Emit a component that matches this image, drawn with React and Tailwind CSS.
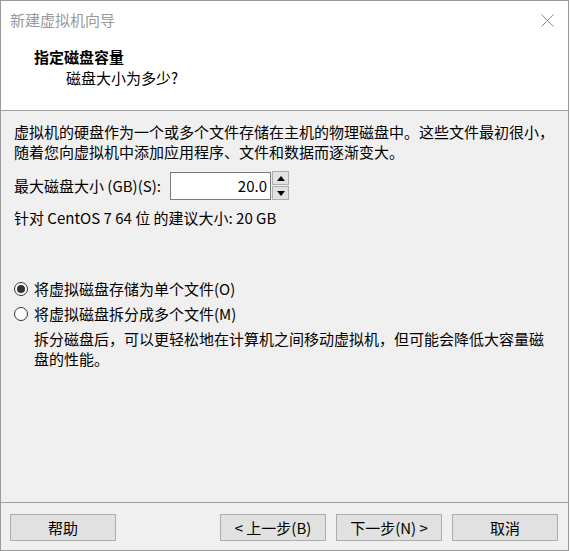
import React from "react";

const font = "font-['Noto_Sans_CJK_SC','Noto_Sans',sans-serif]";

const Radio = ({ checked, label }) => (
    <div className="flex items-center h-[20px]">
        <span className="w-[14px] h-[14px] rounded-full border border-[#333333] bg-white flex items-center justify-center">
            {checked && <span className="w-[8px] h-[8px] rounded-full bg-[#333333]" />}
        </span>
        <span className="ml-[6px]">{label}</span>
    </div>
);

const Button = ({ children }) => (
    <button className="w-[106px] h-[27px] border border-[#adadad] bg-[#e1e1e1] text-[15px] leading-none text-black flex items-center justify-center">
        {children}
    </button>
);

const Spin = ({ up }) => (
    <div className="h-[14px] w-[17px] border border-[#adadad] bg-[#e1e1e1] flex items-center justify-center">
        <svg width="8" height="5" viewBox="0 0 8 5">
            {up ? <polygon points="0,5 8,5 4,0" fill="#000" /> : <polygon points="0,0 8,0 4,5" fill="#000" />}
        </svg>
    </div>
);

export default function App() {
    return (
        <div className={`${font} w-[569px] h-[551px] border border-[#9b9b9b] bg-[#f0f0f0] flex flex-col text-[15px] text-black`}>
            {/* title bar */}
            <div className="h-[38px] bg-white flex items-center justify-between pl-[9px] pr-[14px]">
                <span className="text-[#999999] leading-[20px]">新建虚拟机向导</span>
                <svg width="13" height="13" viewBox="0 0 13 13">
                    <path d="M0.5 0.5 L12.5 12.5 M12.5 0.5 L0.5 12.5" stroke="#8a8a8a" strokeWidth="1" />
                </svg>
            </div>

            {/* header */}
            <div className="bg-white border-b border-[#a0a0a0] pt-[8px] pb-[22px] pl-[33px]">
                <div className="font-bold leading-[20px]">指定磁盘容量</div>
                <div className="mt-[1px] pl-[32px] leading-[20px]">磁盘大小为多少?</div>
            </div>

            {/* body */}
            <div className="flex-1 pl-[13px] pt-[11px] leading-[20px] whitespace-nowrap">
                <p>
                    虚拟机的硬盘作为一个或多个文件存储在主机的物理磁盘中。这些文件最初很小，
                    <br />
                    随着您向虚拟机中添加应用程序、文件和数据而逐渐变大。
                </p>

                <div className="mt-[9px] flex items-center">
                    <span className="w-[156px]">最大磁盘大小 (GB)(S):</span>
                    <div className="w-[101px] h-[28px] border border-[#7a7a7a] bg-white flex items-center justify-end pr-[3px]">
                        20.0
                    </div>
                    <div className="ml-[1px] flex flex-col gap-[1px]">
                        <Spin up />
                        <Spin />
                    </div>
                </div>

                <p className="mt-[8px]">针对 CentOS 7 64 位 的建议大小: 20 GB</p>

                <div className="mt-[51px]">
                    <Radio checked label="将虚拟磁盘存储为单个文件(O)" />
                </div>
                <div className="mt-[5px]">
                    <Radio label="将虚拟磁盘拆分成多个文件(M)" />
                </div>
                <p className="mt-[5px] pl-[20px]">
                    拆分磁盘后，可以更轻松地在计算机之间移动虚拟机，但可能会降低大容量磁
                    <br />
                    盘的性能。
                </p>
            </div>

            {/* footer */}
            <div className="border-t border-[#a0a0a0] pt-[11px] pb-[9px] pl-[9px] pr-[10px] flex items-center">
                <Button>帮助</Button>
                <div className="ml-auto flex gap-[10px]">
                    <Button>&lt; 上一步(B)</Button>
                    <Button>下一步(N) &gt;</Button>
                    <Button>取消</Button>
                </div>
            </div>
        </div>
    );
}
